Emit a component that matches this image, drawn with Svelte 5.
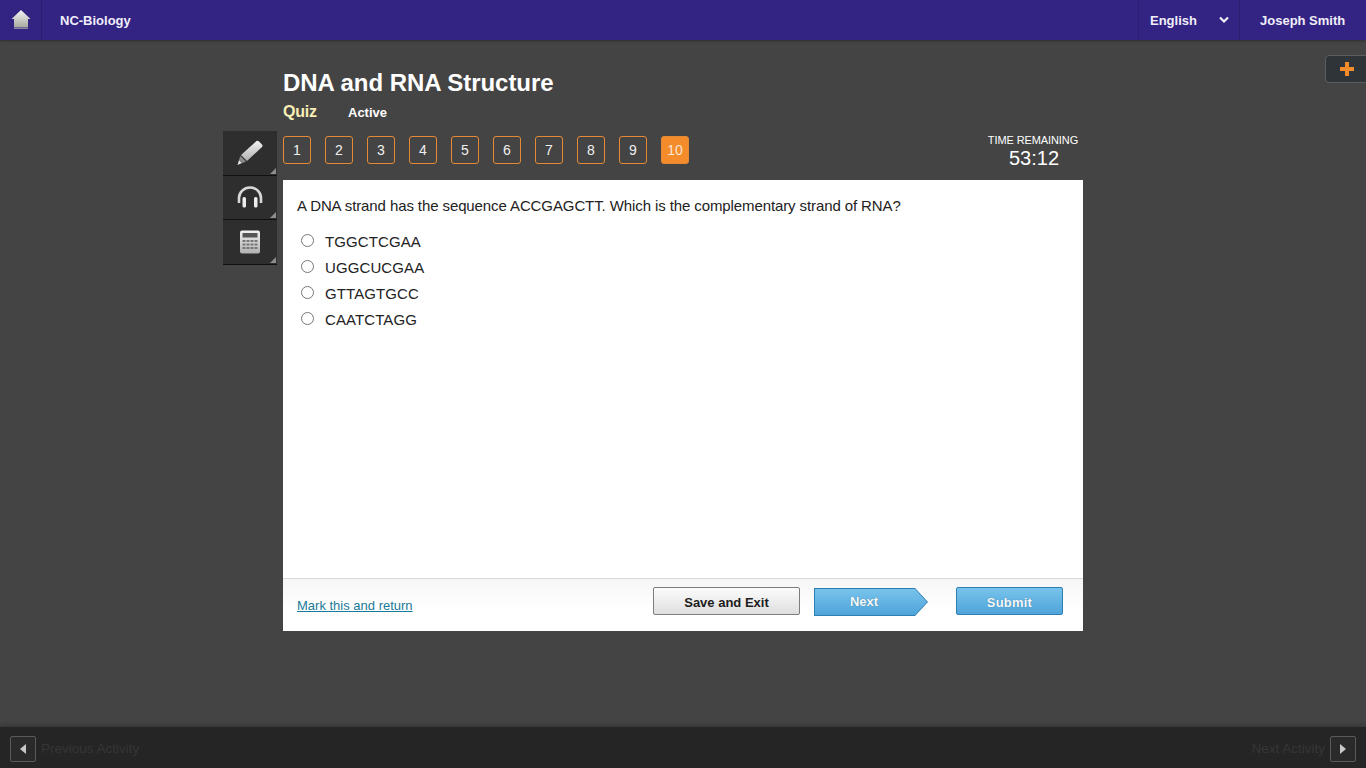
<script>
  const questions = [1, 2, 3, 4, 5, 6, 7, 8, 9, 10];
  const current = 10;
  const answers = ['TGGCTCGAA', 'UGGCUCGAA', 'GTTAGTGCC', 'CAATCTAGG'];
  let picked = $state('');
</script>

<div class="page">
  <header class="topbar">
    <a class="topbar__home" href="#home" aria-label="Home">
      <svg width="20" height="21" viewBox="0 0 20 21">
        <defs>
          <linearGradient id="home-fill" x1="0" y1="0" x2="0" y2="1">
            <stop offset="0" stop-color="#f4f4f6" />
            <stop offset="1" stop-color="#a9a99f" />
          </linearGradient>
        </defs>
        <path d="M10 1 L19.500 10 L17 10 L17 18.500 L3 18.500 L3 10 L.5 10 Z" fill="url(#home-fill)" />
        <path d="M3 19 H17 V20 H3 Z" fill="#8b8a9c" />
      </svg>
    </a>
    <div class="topbar__course">NC-Biology</div>
    <div class="topbar__lang">
      <span>English</span>
      <svg width="10" height="8" viewBox="0 0 10 8"><path d="M1 1.500 L5 5.500 L9 1.500" fill="none" stroke="#f1eef8" stroke-width="2.200" /></svg>
    </div>
    <div class="topbar__user">Joseph Smith</div>
  </header>

  <main class="layout">
    <aside class="tools">
      <button class="tool" aria-label="Highlighter">
        <svg width="28" height="28" viewBox="0 0 28 28">
          <defs>
            <linearGradient id="tool-fill" x1="0" y1="0" x2="0" y2="1">
              <stop offset="0" stop-color="#f2f2f2" />
              <stop offset="1" stop-color="#b0b0b0" />
            </linearGradient>
          </defs>
          <path d="M20.500 2 Q22 1.500 23 2.500 L26 5.500 Q27 6.500 26 8 L11 22 L5 16 Z" fill="url(#tool-fill)" />
          <path d="M4.500 17 L10 22.500 L6.500 24 L3 20.500 Z" fill="#8a8a8a" />
          <path d="M3 21 L6 24 L1.500 26 Z" fill="#e6e6e6" />
        </svg>
        <i></i>
      </button>
      <button class="tool" aria-label="Audio">
        <svg width="26" height="22" viewBox="0 0 26 22">
          <path d="M2 17 V12 a11 10.500 0 0 1 22 0 V17" fill="none" stroke="#d8d8d8" stroke-width="2.600" />
          <rect x="5.500" y="11" width="3.500" height="10.500" rx="1.500" fill="#ececec" />
          <rect x="17" y="11" width="3.500" height="10.500" rx="1.500" fill="#ececec" />
        </svg>
        <i></i>
      </button>
      <button class="tool" aria-label="Calculator">
        <svg width="22" height="24" viewBox="0 0 22 24">
          <rect x="1" y="0.500" width="20" height="23" rx="2" fill="url(#tool-fill)" />
          <rect x="3.500" y="3" width="15" height="4.500" fill="#555" />
          <path d="M3.500 10 h3 v2 h-3 z M7.500 10 h3 v2 h-3 z M11.500 10 h3 v2 h-3 z M15.500 10 h3 v2 h-3 z M3.500 13.500 h3 v2 h-3 z M7.500 13.500 h3 v2 h-3 z M11.500 13.500 h3 v2 h-3 z M15.500 13.500 h3 v2 h-3 z M3.500 17 h3 v2 h-3 z M7.500 17 h3 v2 h-3 z M11.500 17 h3 v2 h-3 z M15.500 17 h3 v2 h-3 z" fill="#777" />
        </svg>
        <i></i>
      </button>
    </aside>

    <section class="quiz">
      <h1 class="quiz__title">DNA and RNA Structure</h1>
      <div class="quiz__meta">
        <span class="quiz__type">Quiz</span>
        <span class="quiz__status">Active</span>
      </div>

      <div class="quiz__nav">
        <div class="numbers">
          {#each questions as n}
            <button class="numbers__item" class:numbers__item--on={n === current}>{n}</button>
          {/each}
        </div>
        <div class="timer">
          <div class="timer__label">TIME REMAINING</div>
          <div class="timer__value">53:12</div>
        </div>
      </div>

      <div class="panel">
        <div class="panel__body">
          <p class="question">A DNA strand has the sequence ACCGAGCTT. Which is the complementary strand of RNA?</p>
          {#each answers as a}
            <label class="answer">
              <input type="radio" name="answer" value={a} bind:group={picked} />
              <span>{a}</span>
            </label>
          {/each}
        </div>
        <div class="panel__foot">
          <a class="mark" href="#mark">Mark this and return</a>
          <button class="btn btn--save">Save and Exit</button>
          <button class="next"><span>Next</span></button>
          <button class="btn btn--submit">Submit</button>
        </div>
      </div>
    </section>

    <button class="plus" aria-label="Open more">
      <svg width="14" height="14" viewBox="0 0 14 14"><path d="M5 0 H9 V5 H14 V9 H9 V14 H5 V9 H0 V5 H5 Z" fill="#f48c2c" /></svg>
    </button>
  </main>

  <footer class="bottombar">
    <div class="bottombar__side">
      <button class="arrow" aria-label="Previous Activity">
        <svg width="8" height="10" viewBox="0 0 8 10"><path d="M7 0 V10 L1 5 Z" fill="#c8c8c8" /></svg>
      </button>
      <span>Previous Activity</span>
    </div>
    <div class="bottombar__side">
      <span>Next Activity</span>
      <button class="arrow" aria-label="Next Activity">
        <svg width="8" height="10" viewBox="0 0 8 10"><path d="M1 0 V10 L7 5 Z" fill="#c8c8c8" /></svg>
      </button>
    </div>
  </footer>
</div>

<style>
  :global(body) {
    background: #444444;
    font-family: "Liberation Sans", Arial, sans-serif;
  }

  button {
    font-family: inherit;
    cursor: pointer;
  }

  .page {
    display: flex;
    flex-direction: column;
    height: 768px;
    overflow: hidden;
    background: #444444;
  }

  .topbar {
    display: flex;
    align-items: stretch;
    flex: none;
    height: 40px;
    background: #332484;
    box-shadow: 0 1px 2px rgba(0, 0, 0, 0.35);
    color: #f1eef8;
    font-size: 13px;
    font-weight: bold;
    line-height: 41px;
  }

  .topbar__home {
    display: flex;
    align-items: center;
    justify-content: center;
    width: 42px;
    padding-bottom: 2px;
    box-sizing: border-box;
    border-right: 1px solid #2b1e72;
  }

  .topbar__course {
    flex: 1;
    padding-left: 18px;
  }

  .topbar__lang {
    display: flex;
    align-items: center;
    justify-content: space-between;
    width: 102px;
    box-sizing: border-box;
    padding: 0 10px 0 11px;
    border-left: 1px solid #2b1e72;
    border-right: 1px solid #2b1e72;
  }

  .topbar__user {
    width: 126px;
    box-sizing: border-box;
    padding-left: 20px;
  }

  .layout {
    position: relative;
    flex: 1;
    display: grid;
    grid-template-columns: 1fr 800px 1fr;
    align-items: start;
  }

  .tools {
    justify-self: end;
    display: flex;
    flex-direction: column;
    width: 54px;
    margin: 91px 6px 0 0;
  }

  .tool {
    position: relative;
    display: flex;
    align-items: center;
    justify-content: center;
    height: 44.6px;
    padding: 0 1px 0 0;
    background: #2e2e2e;
    border: none;
    border-bottom: 1px solid #111;
  }

  .tool i {
    position: absolute;
    right: 1px;
    bottom: 1px;
    border-style: solid;
    border-width: 0 0 6px 6px;
    border-color: transparent transparent #8d8d8d transparent;
  }

  .quiz__title {
    margin: 28px 0 0;
    font-size: 24px;
    line-height: 30px;
    font-weight: bold;
    letter-spacing: -0.05px;
    color: #fff;
  }

  .quiz__meta {
    display: flex;
    align-items: baseline;
    margin-top: 5px;
    height: 20px;
  }

  .quiz__type {
    width: 65px;
    font-size: 16px;
    font-weight: bold;
    letter-spacing: -0.2px;
    color: #f9eeb4;
  }

  .quiz__status {
    font-size: 13px;
    font-weight: bold;
    color: #fff;
  }

  .quiz__nav {
    display: flex;
    justify-content: space-between;
    align-items: flex-start;
    height: 54px;
    margin-top: 3px;
  }

  .numbers {
    display: flex;
    gap: 14px;
    padding-top: 10px;
  }

  .numbers__item {
    width: 28px;
    height: 28px;
    padding: 0;
    background: transparent;
    border: 1px solid #e58a34;
    border-radius: 3px;
    color: #f0f0f0;
    font-size: 14px;
  }

  .numbers__item--on {
    background: #f48c2c;
    color: #fbe6d0;
  }

  .timer {
    width: 100px;
    padding-top: 8px;
    text-align: center;
    color: #fff;
  }

  .timer__label {
    font-size: 11px;
    line-height: 13px;
    letter-spacing: -0.1px;
  }

  .timer__value {
    padding-left: 2px;
    font-size: 20px;
    line-height: 22px;
  }

  .panel {
    display: flex;
    flex-direction: column;
    height: 451px;
    background: #fff;
    color: #222;
  }

  .panel__body {
    flex: 1;
    padding: 17px 14px 0;
    font-size: 15px;
  }

  .question {
    margin: 0 0 14px;
    line-height: 18px;
    letter-spacing: -0.1px;
  }

  .answer {
    display: flex;
    align-items: center;
    height: 26px;
    line-height: 26px;
    letter-spacing: 0.1px;
  }

  .answer input {
    width: 13px;
    height: 13px;
    margin: 0 11px 4px 4px;
  }

  .panel__foot {
    display: flex;
    align-items: flex-start;
    flex: none;
    height: 53px;
    box-sizing: border-box;
    padding: 8px 20px 0 14px;
    border-top: 1px solid #d9d9d9;
    background: linear-gradient(#f6f6f6, #fff 60%);
  }

  .mark {
    flex: 1;
    margin-top: 11px;
    font-size: 13px;
    color: #1a7a99;
  }

  .btn {
    height: 28px;
    padding: 2px 0 0;
    border-radius: 2px;
    font-size: 13px;
    font-weight: bold;
  }

  .btn--save {
    width: 147px;
    margin-right: 14px;
    background: linear-gradient(#fcfcfc, #dedede);
    border: 1px solid #7d7d7d;
    color: #1c1c1c;
  }

  .next {
    width: 114px;
    height: 28px;
    margin: 1px 28px 0 0;
    padding: 1px;
    background: #2c7fb1;
    border: none;
    clip-path: polygon(0 0, 101px 0, 100% 50%, 101px 100%, 0 100%);
  }

  .next span {
    display: block;
    height: 100%;
    padding-right: 14px;
    line-height: 26px;
    background: linear-gradient(#78c3ec, #4fa4d9);
    clip-path: polygon(0 0, 100px 0, 100% 50%, 100px 100%, 0 100%);
    color: #f4f9fc;
    font-size: 13px;
    font-weight: bold;
    text-shadow: 0 0 1px #3a6f90;
  }

  .btn--submit {
    width: 107px;
    background: linear-gradient(#78c3ec, #4fa4d9);
    border: 1px solid #2c7fb1;
    color: #f4f9fc;
    letter-spacing: 0.2px;
    text-shadow: 0 0 1px #3a6f90;
  }

  .plus {
    position: absolute;
    top: 15px;
    right: -4px;
    display: flex;
    align-items: center;
    justify-content: center;
    width: 45px;
    height: 28px;
    padding: 0 1px 0 0;
    background: #2f3438;
    border: 1px solid #5d5d5d;
    border-radius: 4px;
  }

  .bottombar {
    display: flex;
    align-items: center;
    justify-content: space-between;
    flex: none;
    height: 41px;
    padding: 2px 10px 0;
    box-sizing: border-box;
    background: #252525;
    box-shadow: 0 -2px 4px rgba(0, 0, 0, 0.2);
    color: #363636;
    font-size: 13.5px;
  }

  .bottombar__side {
    display: flex;
    align-items: center;
    gap: 5px;
  }

  .arrow {
    display: flex;
    align-items: center;
    justify-content: center;
    width: 26px;
    height: 26px;
    padding: 0;
    background: #2a2a2a;
    border: 1px solid #5a5a5a;
    border-radius: 2px;
  }
</style>
